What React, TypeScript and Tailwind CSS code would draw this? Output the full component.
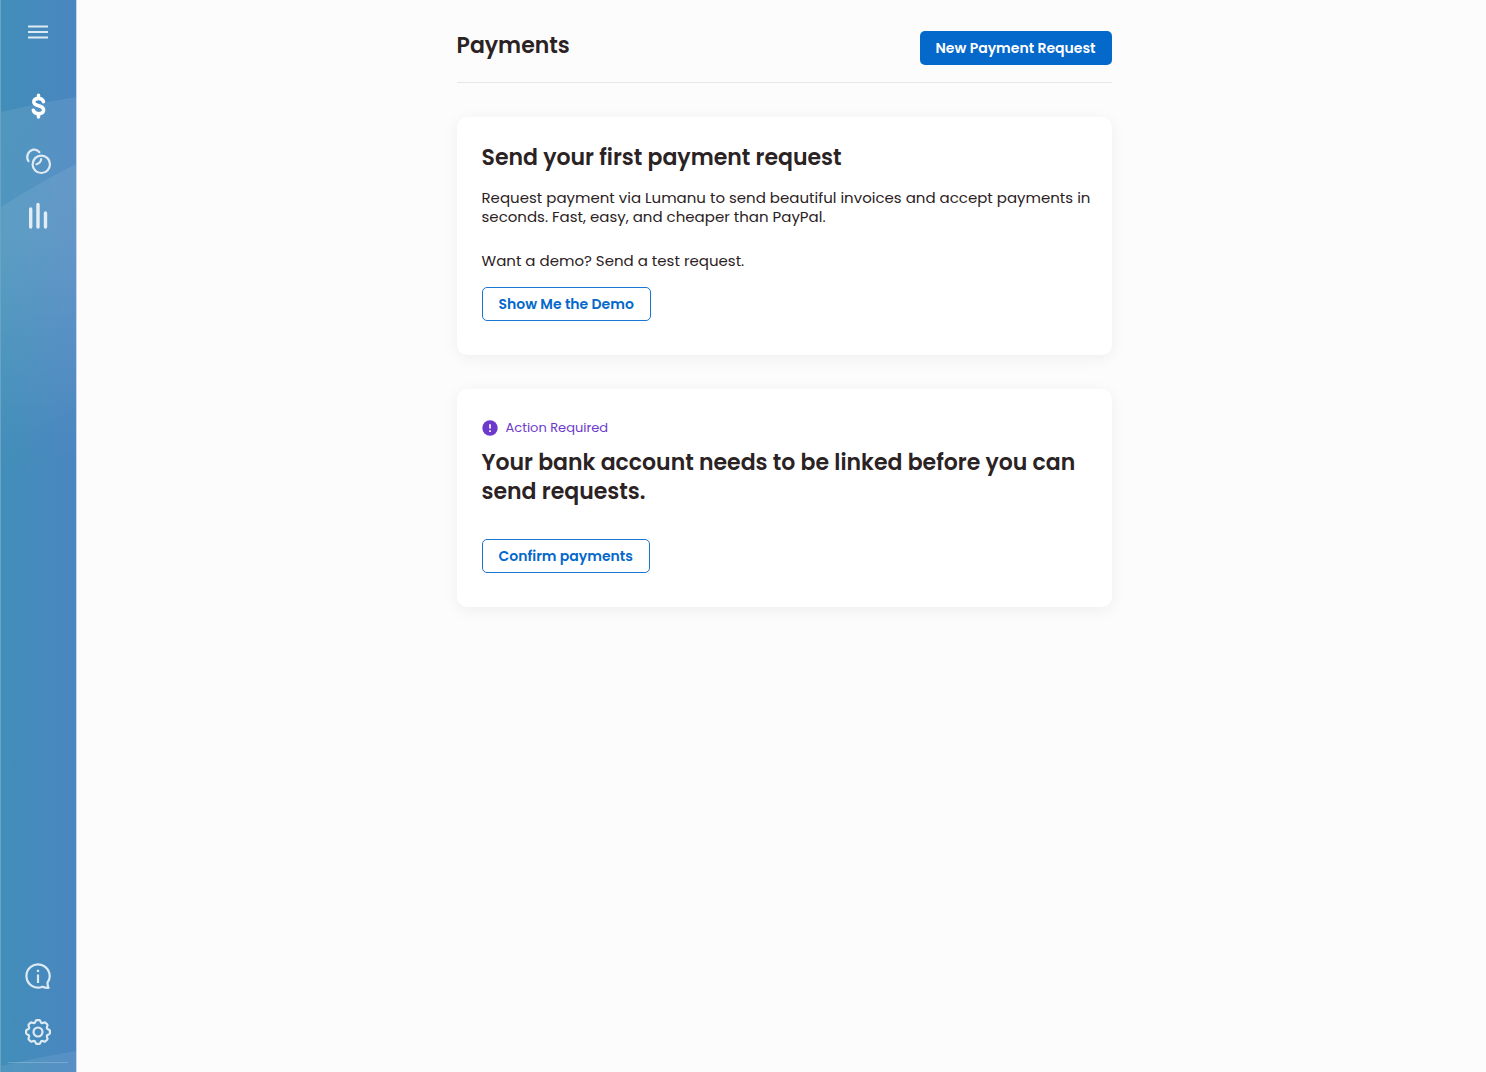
import type { ReactNode } from "react";

const gearTeeth = [0, 45, 90, 135, 180, 225, 270, 315];

function SidebarLink({ label, children }: { label: string; children: ReactNode }) {
  return (
    <a
      href="#"
      aria-label={label}
      className="flex h-7 w-7 items-center justify-center text-white"
    >
      {children}
    </a>
  );
}

function SidebarWaves() {
  return (
    <svg
      className="absolute inset-0 h-full w-full"
      viewBox="0 0 76 1072"
      preserveAspectRatio="none"
      aria-hidden="true"
    >
      <defs>
        <linearGradient id="wave" x1="0" y1="0" x2="0" y2="1">
          <stop offset="0" stopColor="#fff" stopOpacity="0.08" />
          <stop offset="0.35" stopColor="#fff" stopOpacity="0.07" />
          <stop offset="1" stopColor="#fff" stopOpacity="0" />
        </linearGradient>
      </defs>
      <path d="M0 112Q38 103 76 97V450L0 480Z" fill="url(#wave)" />
      <path d="M0 207Q36 184 76 164V410L0 440Z" fill="url(#wave)" />
      <path d="M0 1066Q38 1057 76 1051V1072H0Z" fill="#fff" fillOpacity="0.08" />
    </svg>
  );
}

function Sidebar() {
  return (
    <aside className="relative flex w-[77px] shrink-0 flex-col items-center border-r border-[#c5d5ec] border-l border-l-[#6ba3c6] bg-linear-to-r from-[#418eb9] to-[#4a86c0] pr-px">
      <SidebarWaves />
      <button
        type="button"
        aria-label="Open menu"
        className="relative mt-[18px] flex h-7 w-7 items-center justify-center"
      >
        <svg width="20" height="14" viewBox="0 0 20 14" stroke="#fff" strokeOpacity="0.82" strokeWidth="2">
          <path d="M0 1.5h20M0 7h20M0 12.5h20" />
        </svg>
      </button>
      <nav className="relative mt-[46px] flex grow flex-col gap-[27px]">
        <SidebarLink label="Payments">
          <svg width="28" height="28" viewBox="0 0 28 28" fill="none" stroke="#fff" strokeWidth="3.5" strokeLinecap="round">
            <path d="M19.5 9.6C18.800 7.600 17 6.500 14.600 6.500c-2.900 0-4.800 1.400-4.800 3.500 0 2.500 2.200 3.100 4.800 3.800 2.800.7 5 1.500 5 4.200 0 2.300-2 3.700-5 3.700-2.700 0-4.700-1.300-5.300-3.400" />
            <path d="M14.500 3.300v3M14.500 22v3" />
          </svg>
        </SidebarLink>
        <SidebarLink label="Collaborations">
          <svg width="28" height="28" viewBox="0 0 28 28" fill="none" stroke="#fff" strokeOpacity="0.82" strokeWidth="2.2" strokeLinecap="round">
            <circle cx="17.300" cy="17.300" r="8.700" />
            <path d="M4.500 14.200A7.600 7.600 0 0 1 8.800 2.700C11.300 2.200 13.800 3.200 15.400 5.200" />
            <path d="M17.200 12.200C16.900 14.600 15 16.600 12.500 17.200" />
          </svg>
        </SidebarLink>
        <SidebarLink label="Reports">
          <svg width="28" height="28" viewBox="0 0 28 28" stroke="#fff" strokeOpacity="0.82" strokeWidth="3.4" strokeLinecap="round">
            <path d="M6.700 8.500v18M14 4v22.500M21.500 12.500v14" transform="translate(0 -1.500)" />
          </svg>
        </SidebarLink>
      </nav>
      <nav className="relative mb-[9px] flex flex-col items-center gap-7">
        <SidebarLink label="Help">
          <svg width="28" height="28" viewBox="0 0 28 28" fill="none" stroke="#fff" strokeOpacity="0.82" strokeWidth="2.2" strokeLinejoin="round">
            <path d="M23.500 20.700A11.600 11.600 0 1 0 18.500 24.700Q21 25.900 24.500 26Q23.500 23.600 23.500 20.700Z" />
            <path d="M14 12.500v8.500M14 7.800v2.200" />
          </svg>
        </SidebarLink>
        <SidebarLink label="Settings">
          <svg width="28" height="28" viewBox="-14 -14 28 28" fill="none" stroke="#fff" strokeWidth="2.2" opacity="0.82">
            <circle r="4.500" />
            {gearTeeth.map((angle) => (
              <path
                key={angle}
                d="M-3.730-9C-2.400-8.800-2.800-11.900-1.300-11.900H1.300C2.800-11.900 2.400-8.800 3.730-9"
                strokeLinecap="round"
                transform={`rotate(${angle})`}
              />
            ))}
          </svg>
        </SidebarLink>
        <hr className="-mt-3 w-[60px] border-white/20" />
      </nav>
    </aside>
  );
}

function OutlineButton({ children }: { children: ReactNode }) {
  return (
    <button
      type="button"
      className="h-[34px] self-start rounded-[5px] border border-[#1a76d0] px-4 text-sm font-semibold text-[#0568cb]"
    >
      {children}
    </button>
  );
}

function Card({ children }: { children: ReactNode }) {
  return (
    <section className="mt-[34px] flex flex-col rounded-[10px] bg-white pt-[26px] pr-5 pb-[34px] pl-[25px] shadow-[0_3px_16px_rgba(0,0,0,0.06)]">
      {children}
    </section>
  );
}

export default function App() {
  return (
    <div className="flex min-h-screen bg-[#fcfcfc] font-['Poppins','Inter',sans-serif] text-[#2b2224]">
      <Sidebar />
      <main className="flex grow justify-center pl-[5px]">
        <div className="w-full max-w-[655px]">
          <header className="flex items-start justify-between border-b border-[#e8e8e8] pt-[31px] pb-[17px]">
            <h1 className="text-[22px] leading-[29px] font-semibold">Payments</h1>
            <button
              type="button"
              className="h-[34px] rounded-[5px] bg-[#0568cb] px-4 text-sm font-semibold text-white"
            >
              New Payment Request
            </button>
          </header>

          <Card>
            <h2 className="text-[22px] leading-[29px] font-semibold">
              Send your first payment request
            </h2>
            <p className="mt-4 text-[15px] leading-[19px]">
              Request payment via Lumanu to send beautiful invoices and accept
              payments in seconds. Fast, easy, and cheaper than PayPal.
            </p>
            <p className="mt-[25px] mb-[17px] text-[15px] leading-[19px]">
              Want a demo? Send a test request.
            </p>
            <OutlineButton>Show Me the Demo</OutlineButton>
          </Card>

          <Card>
            <div className="mt-[3px] flex items-center gap-2 text-[13px] leading-[19px] text-[#6d39cc]">
              <svg width="16" height="16" viewBox="0 0 16 16" aria-hidden="true">
                <circle cx="8" cy="8" r="7.700" fill="#6d39cc" />
                <path d="M8 4.200v4.300M8 10.200v1.800" stroke="#fff" strokeOpacity="0.85" strokeWidth="2" />
              </svg>
              Action Required
            </div>
            <h2 className="mt-[11px] mb-[33px] text-[22px] leading-[29px] font-semibold">
              Your bank account needs to be linked before you can send requests.
            </h2>
            <OutlineButton>Confirm payments</OutlineButton>
          </Card>
        </div>
      </main>
    </div>
  );
}
